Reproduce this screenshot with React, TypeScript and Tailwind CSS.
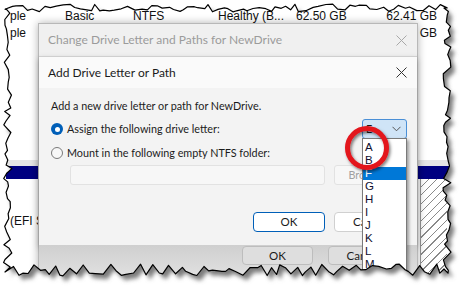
import React from 'react';

const UI = 'Lato, "Noto Sans", sans-serif';
const OLD = '"Liberation Sans", Arial, sans-serif';

const LETTERS = ['A', 'B', 'F', 'G', 'H', 'I', 'J', 'K', 'L', 'M', 'N'];

// jagged "torn paper" outline, seeded so it comes out the same every time
function tornPath(): string {
  let s = 11;
  const rnd = () => {
    s = (s * 9301 + 49297) % 233280;
    return s / 233280;
  };
  const pts: [number, number][] = [];
  for (let x = 5; x < 448; x += 3 + rnd() * 5) pts.push([x, 4 + rnd() * 8]);
  for (let y = 8; y < 272; y += 3 + rnd() * 5) pts.push([443 + rnd() * 8, y]);
  for (let x = 448; x > 6; x -= 3 + rnd() * 5) pts.push([x, 264 + rnd() * 12]);
  for (let y = 272; y > 8; y -= 3 + rnd() * 5) pts.push([3 + rnd() * 9, y]);
  return 'M' + pts.map((p) => p[0].toFixed(1) + ',' + p[1].toFixed(1)).join('L') + 'Z';
}

function CloseX({ color }: { color: string }) {
  return (
    <svg width="11" height="11" viewBox="0 0 11 11">
      <path d="M0.5 0.5L10.5 10.5M10.5 0.5L0.5 10.5" stroke={color} strokeWidth="1" />
    </svg>
  );
}

function Radio({ checked }: { checked?: boolean }) {
  if (checked) {
    return (
      <span className="flex h-[12px] w-[12px] items-center justify-center rounded-full bg-[#005fb8]">
        <span className="h-[5px] w-[5px] rounded-full bg-white" />
      </span>
    );
  }
  return <span className="h-[12px] w-[12px] rounded-full border border-[#7a7a7a] bg-[#f7f7f7]" />;
}

function Background() {
  return (
    <div className="flex h-full flex-col text-[12px] text-[#111]" style={{ fontFamily: OLD }}>
      <div className="h-[7px]" />
      {[
        ['ple', 'Basic', 'NTFS', 'Healthy (B...', '62.50 GB', '62.41 GB'],
        ['ple', 'Basic', '', '', '', '260 GB'],
      ].map((r, i) => (
        <div key={i} className="flex h-[17px] items-center pl-[10px] pr-[24px] leading-none">
          <span className="w-[55px]">{r[0]}</span>
          <span className="w-[68px]">{r[1]}</span>
          <span className="w-[85px]">{r[2]}</span>
          <span className="w-[78px]">{r[3]}</span>
          <span className="w-[60px]">{r[4]}</span>
          <span className="flex-1 text-right">{r[5]}</span>
        </div>
      ))}
      <div className="h-[119px]" />
      <div className="h-[6px] bg-[#e6e6e6]" />
      <div className="mx-[6px] h-[13px] bg-[#000080]" />
      <div className="flex flex-1">
        <div className="flex flex-1 flex-col pl-[10px]">
          <div className="h-[36px]" />
          <span className="leading-none">(EFI System Partition)</span>
        </div>
        <div className="mr-[14px] w-[27px] border-l border-[#999] bg-[repeating-linear-gradient(135deg,#ffffff_0px,#ffffff_5px,#8a8a8a_5px,#8a8a8a_6px)]" />
      </div>
    </div>
  );
}

function Dialogs() {
  return (
    <div
      className="absolute left-[38px] top-[23px] flex h-[261px] w-[380px] flex-col border border-[#b8b8b8] bg-[#f0f0f0] shadow-[0_0_8px_rgba(0,0,0,0.3)]"
      style={{ fontFamily: UI }}
    >
      {/* outer, inactive dialog title */}
      <div className="flex h-[32px] items-center justify-between pl-[9px] pr-[10px] text-[12px] text-[#9b9b9b]">
        <span>Change Drive Letter and Paths for NewDrive</span>
        <CloseX color="#a8a8a8" />
      </div>

      {/* inner dialog */}
      <div className="flex h-[189px] flex-col border-t border-[#cfcfcf] shadow-[0_3px_6px_rgba(0,0,0,0.25)]">
        <div className="flex h-[31px] items-center justify-between bg-[#fafafa] pl-[9px] pr-[10px] text-[12px] text-[#1b1b1b]">
          <span>Add Drive Letter or Path</span>
          <CloseX color="#333" />
        </div>
        <div className="flex flex-1 flex-col bg-[#f3f3f3] pl-[12px] text-[10.8px] text-[#1b1b1b]">
          <div className="mt-[10px] h-[16px] leading-[16px]">Add a new drive letter or path for NewDrive.</div>
          <div className="mt-[5px] flex h-[20px] items-center">
            <Radio checked />
            <span className="ml-[4px] flex-1">Assign the following drive letter:</span>
            <div className="mr-[10px] flex h-[20px] w-[45px] items-center justify-between rounded-[3px] border border-[#4a8fd6] bg-[#cfe4f7] pl-[3px] pr-[5px]">
              <span>E</span>
              <svg width="9" height="6" viewBox="0 0 9 6">
                <path d="M0.5 0.8L4.5 4.8L8.5 0.8" stroke="#555" fill="none" strokeWidth="1" />
              </svg>
            </div>
          </div>
          <div className="mt-[6px] flex h-[16px] items-center">
            <Radio />
            <span className="ml-[4px]">Mount in the following empty NTFS folder:</span>
          </div>
          <div className="mt-[4px] flex h-[20px] gap-[9px] pl-[19px]">
            <div className="w-[255px] rounded-[3px] border border-[#e2e2e2] bg-[#f7f7f7]" />
            <div className="flex w-[72px] items-center justify-center rounded-[3px] border border-[#e2e2e2] bg-[#f7f7f7] text-[#a0a0a0]">
              Browse...
            </div>
          </div>
          <div className="mt-[27px] flex gap-[9px] pl-[202px] text-[11.5px]">
            <div className="flex h-[20px] w-[72px] items-center justify-center rounded-[4px] border border-[#005fb8] bg-white">
              OK
            </div>
            <div className="flex h-[20px] w-[72px] items-center justify-center rounded-[4px] border border-[#d0d0d0] bg-white">
              Cancel
            </div>
          </div>
        </div>
      </div>

      {/* outer dialog buttons */}
      <div className="flex flex-1 gap-[15px] bg-[linear-gradient(#cfcfcf,#e4e4e4)] pl-[203px] pt-[1px] text-[11.5px] text-[#1b1b1b]">
        <div className="flex h-[19px] w-[71px] items-center justify-center rounded-[4px] border border-[#bdbdbd] bg-[#dedede]">
          OK
        </div>
        <div className="flex h-[19px] w-[71px] items-center justify-center rounded-[4px] border border-[#bdbdbd] bg-[#dedede]">
          Cancel
        </div>
      </div>
    </div>
  );
}

function LetterList() {
  return (
    <div
      className="absolute left-[362px] top-[138px] flex w-[45px] flex-col border border-[#7a7a7a] bg-white pt-[2px] text-[11.5px] leading-[13px] text-[#101030] shadow-[2px_2px_3px_rgba(0,0,0,0.35)]"
      style={{ fontFamily: OLD }}
    >
      {LETTERS.map((l) => (
        <div
          key={l}
          className={l === 'F' ? 'h-[13px] bg-[#0078d7] pl-[2px] text-white' : 'h-[13px] pl-[2px]'}
        >
          {l}
        </div>
      ))}
    </div>
  );
}

function RedCircle() {
  return (
    <svg className="absolute left-[338px] top-[119px]" width="60" height="60" viewBox="0 0 60 60">
      <defs>
        <filter id="rc" x="-20%" y="-20%" width="140%" height="140%">
          <feDropShadow dx="1.5" dy="2" stdDeviation="1.5" floodColor="#000" floodOpacity="0.5" />
        </filter>
      </defs>
      <circle cx="29" cy="29" r="19.5" fill="none" stroke="#e3131b" strokeWidth="5" filter="url(#rc)" />
    </svg>
  );
}

function TornEdge() {
  const d = tornPath();
  return (
    <svg className="pointer-events-none absolute inset-0" width="461" height="290" viewBox="0 0 461 290">
      <defs>
        <mask id="outside">
          <rect width="461" height="290" fill="white" />
          <path d={d} fill="black" />
        </mask>
        <filter id="blur" x="-5%" y="-5%" width="110%" height="110%">
          <feGaussianBlur stdDeviation="2" />
        </filter>
      </defs>
      <g mask="url(#outside)">
        <rect width="461" height="290" fill="white" />
        <path d={d} transform="translate(4 5)" fill="#7d7d7d" filter="url(#blur)" />
      </g>
      <path d={d} fill="none" stroke="#000" strokeWidth="1.2" strokeLinejoin="round" />
    </svg>
  );
}

export default function App() {
  return (
    <div className="relative h-[290px] w-[461px] overflow-hidden bg-white">
      <Background />
      <Dialogs />
      <LetterList />
      <RedCircle />
      <TornEdge />
    </div>
  );
}
